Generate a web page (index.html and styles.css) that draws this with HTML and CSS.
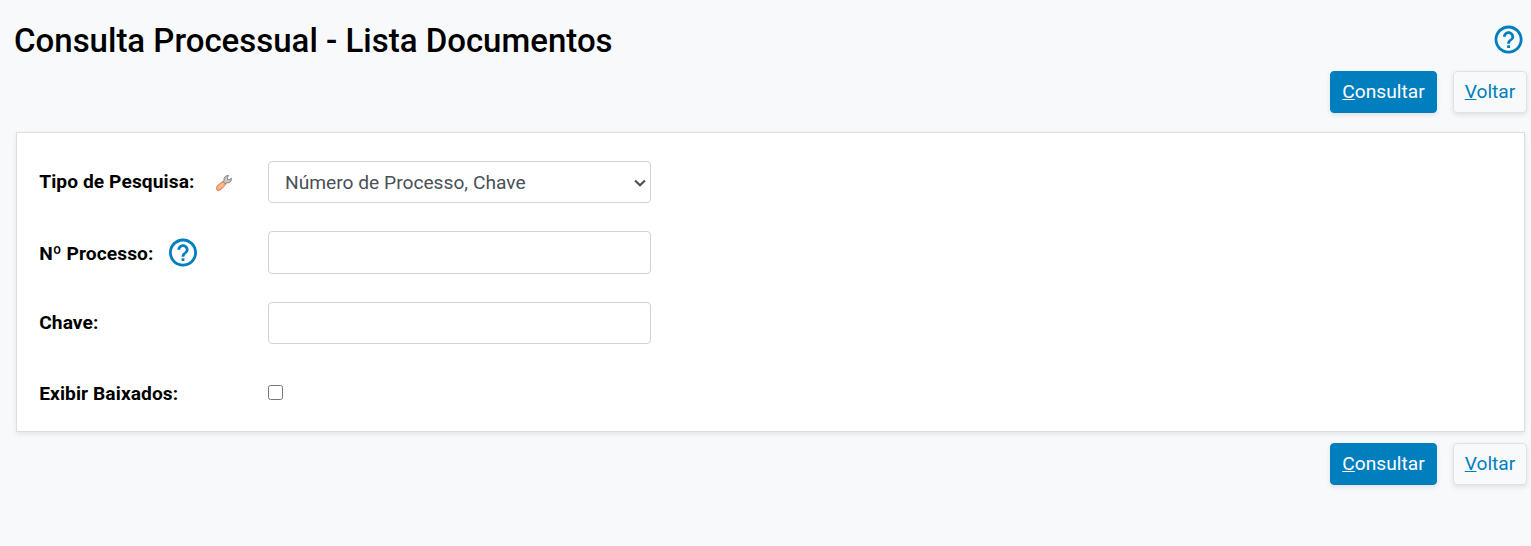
FILE: index.html
```html
<!DOCTYPE html>
<html lang="pt-BR">
<head>
<meta charset="utf-8">
<title>Consulta Processual - Lista Documentos</title>
<link rel="stylesheet" href="styles.css">
</head>
<body>
<header class="page-header">
  <h1 class="page-title">Consulta Processual - Lista Documentos</h1>
  <svg class="help-icon" viewBox="2.300 2.300 20 20"><path d="M11 18h2v-2h-2v2zm1-16C6.480 2 2 6.480 2 12s4.480 10 10 10 10-4.480 10-10S17.520 2 12 2zm0 18c-4.410 0-8-3.590-8-8s3.590-8 8-8 8 3.590 8 8-3.590 8-8 8zm0-14c-2.210 0-4 1.790-4 4h2c0-1.100.9-2 2-2s2 .9 2 2c0 2-3 1.750-3 5h2c0-2.250 3-2.500 3-5 0-2.210-1.790-4-4-4z"/></svg>
</header>
<div class="actions">
  <button class="btn btn-primary"><u>C</u>onsultar</button>
  <button class="btn btn-secondary"><u>V</u>oltar</button>
</div>
<form class="panel">
  <label class="label label-raised" for="tipo">Tipo de Pesquisa:
    <svg class="wrench" viewBox="0 0 16 16"><path class="handle" d="M1.300 10.800 6.500 6.600Q8 6 9.200 7.200 10.400 8.500 9.400 9.900L5.500 14Q3 16 1.200 15.200-.2 13.300 1.300 10.800Z"/><path class="grip" d="m3 12.500 4.200-3.700"/><path class="head" d="M7 6.500 8 5.500Q7.500 2.800 9.300 1.500q1.500-1.200 3.300-.9L11.200 2.800l.3 1.600 1.600.4 2.200-1.500q.5 2.300-1.200 3.700-1.600 1.200-3.500.8L9.700 8.800Z"/></svg>
  </label>
  <div class="select-wrap">
    <select class="control select" id="tipo"><option>Número de Processo, Chave</option></select>
    <svg class="chevron" viewBox="0 0 12 8"><path d="m1 1.500 5 4.700 5-4.700"/></svg>
  </div>
  <label class="label label-lowered" for="processo">Nº Processo:
    <svg class="help-icon field-help" viewBox="2 2.300 20 20"><path d="M11 18h2v-2h-2v2zm1-16C6.480 2 2 6.480 2 12s4.480 10 10 10 10-4.480 10-10S17.520 2 12 2zm0 18c-4.410 0-8-3.590-8-8s3.590-8 8-8 8 3.590 8 8-3.590 8-8 8zm0-14c-2.210 0-4 1.790-4 4h2c0-1.100.9-2 2-2s2 .9 2 2c0 2-3 1.750-3 5h2c0-2.250 3-2.500 3-5 0-2.210-1.790-4-4-4z"/></svg>
  </label>
  <input class="control" id="processo" type="text">
  <label class="label label-raised" for="chave">Chave:</label>
  <input class="control" id="chave" type="text">
  <label class="label" for="baixados">Exibir Baixados:</label>
  <input class="check" id="baixados" type="checkbox">
</form>
<div class="actions actions-bottom">
  <button class="btn btn-primary"><u>C</u>onsultar</button>
  <button class="btn btn-secondary"><u>V</u>oltar</button>
</div>
</body>
</html>
```
FILE: styles.css
```css
* { box-sizing: border-box; }
body { margin: 0; min-height: 546px; background: #f8f9fb; font-family: Roboto, sans-serif; font-size: 19.2px; color: #000; }
.page-header { display: flex; justify-content: space-between; align-items: center; height: 71px; padding: 10px 8px 0 14px; }
.page-title { margin: 0; font-size: 33px; font-weight: 500; line-height: 40px; }
.help-icon { width: 28px; height: 28px; fill: #007ebd; overflow: visible; }
.page-header .help-icon { margin-bottom: 2px; }
.actions { display: flex; justify-content: flex-end; gap: 16px; padding-right: 4px; height: 42px; }
.btn { height: 42px; padding: 0 0 2px; border: 1px solid #007ebd; border-radius: 4px; font: 400 19.2px Roboto, sans-serif; box-shadow: 0 2px 5px rgba(0,0,0,.1); }
.btn-primary { width: 107px; background: #007ebd; color: #fff; }
.btn-secondary { width: 74px; background: #f8f9fb; border-color: #dee2e6; color: #007ebd; }
.panel { display: grid; grid-template-columns: 229px 383px; grid-template-rows: 42px 43px 42px 42px; row-gap: 28px; align-items: center; height: 300px; margin: 19px 6px 0 16px; padding: 28px 23px 0 22px; background: #fff; border: 1px solid #dcdee0; box-shadow: 0 2px 5px rgba(0,0,0,.09); }
.label { display: flex; align-items: center; padding-left: .2px; font-weight: 700; letter-spacing: .08px; }
.label-raised { padding-bottom: 2px; }
.label-lowered { padding-top: 1px; }
.wrench { width: 16px; height: 16px; margin: 3px 0 0 21.300px; stroke-width: .9; }
.handle { fill: #fbb083; stroke: #cf7545; }
.grip { fill: none; stroke: #ffc9a5; }
.head { fill: #c9c9c9; stroke: #777; }
.field-help { margin: 0 0 1px 15.600px; }
.control { width: 383px; height: 100%; border: 1px solid #ced4da; border-radius: 4px; background: #fff; font: 400 19.2px Roboto, sans-serif; color: #495057; }
.select-wrap { position: relative; height: 42px; }
.select { appearance: none; padding: 0 30px 0 16px; }
.chevron { position: absolute; top: 18px; right: 5px; width: 12px; height: 8px; fill: none; stroke: #495057; stroke-width: 2.1; pointer-events: none; }
.check { width: 15px; height: 15px; margin: 0 0 2px; }
.actions-bottom { margin-top: 11px; }
```
